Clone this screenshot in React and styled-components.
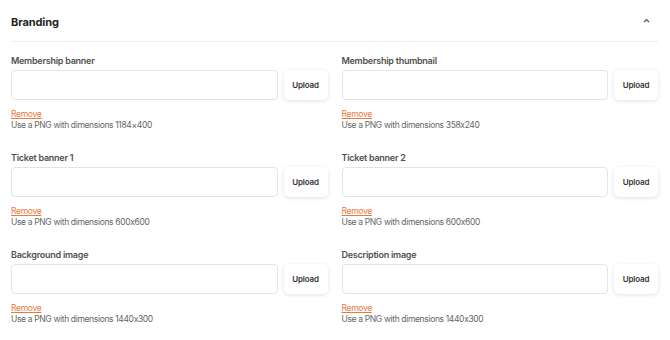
import React from 'react'
import styled, { createGlobalStyle } from 'styled-components'

const GlobalStyle = createGlobalStyle`
  body {
    margin: 0;
    background: #fff;
    font-family: Inter, "Noto Sans", sans-serif;
    font-feature-settings: "calt" 0;
  }
`

const Section = styled.section`
  width: 670px;
  padding: 0 12px 0 11px;
  box-sizing: border-box;
`

const Header = styled.div`
  height: 41px;
  display: flex;
  align-items: center;
  justify-content: space-between;
  border-bottom: 1px solid #ececec;
`

const Title = styled.h2`
  margin: 2px 0 0;
  font-size: 11px;
  font-weight: 700;
  letter-spacing: -0.1px;
  color: #1f1f1f;
`

const Chevron = styled.button`
  border: none;
  background: none;
  padding: 0;
  margin-right: 8px;
  display: flex;
  color: #555;
`

const Grid = styled.div`
  display: grid;
  grid-template-columns: 1fr 1fr;
  column-gap: 14px;
  row-gap: 21px;
  padding-top: 12px;
`

const Field = styled.div`
  display: flex;
  flex-direction: column;
`

const Label = styled.label`
  font-size: 9px;
  line-height: 14px;
  font-weight: 600;
  letter-spacing: -0.25px;
  color: #505050;
  margin-bottom: 2px;
`

const InputRow = styled.div`
  display: flex;
  gap: 6px;
  height: 30px;
`

const FileBox = styled.div`
  flex: 1;
  border: 1px solid #e4e4e4;
  border-radius: 4px;
`

const UploadButton = styled.button`
  width: 44px;
  border: none;
  border-radius: 5px;
  background: #fff;
  box-shadow: 0 1px 4px rgba(0, 0, 0, 0.12);
  font-family: inherit;
  font-size: 8px;
  font-weight: 600;
  letter-spacing: -0.15px;
  color: #333;
  padding: 0;
`

const RemoveLink = styled.a`
  margin-top: 8px;
  font-size: 8.5px;
  line-height: 12px;
  letter-spacing: -0.3px;
  color: #e67a3c;
  text-decoration: underline;
  text-underline-offset: 1px;
  align-self: flex-start;
`

const Help = styled.div`
  font-size: 8.5px;
  line-height: 10px;
  letter-spacing: -0.35px;
  color: #666;
`

const fields = [
  { label: 'Membership banner', dims: '1184×400' },
  { label: 'Membership thumbnail', dims: '358x240' },
  { label: 'Ticket banner 1', dims: '600x600' },
  { label: 'Ticket banner 2', dims: '600x600' },
  { label: 'Background image', dims: '1440x300' },
  { label: 'Description image', dims: '1440x300' },
]

export default function App() {
  return (
    <>
      <GlobalStyle />
      <Section>
        <Header>
          <Title>Branding</Title>
          <Chevron>
            <svg width="7" height="5" viewBox="0 0 7 5" fill="none">
              <path d="M1 4l2.5-2.5L6 4" stroke="currentColor" strokeWidth="1.2" />
            </svg>
          </Chevron>
        </Header>
        <Grid>
          {fields.map((f) => (
            <Field key={f.label}>
              <Label>{f.label}</Label>
              <InputRow>
                <FileBox />
                <UploadButton>Upload</UploadButton>
              </InputRow>
              <RemoveLink href="#">Remove</RemoveLink>
              <Help>Use a PNG with dimensions {f.dims}</Help>
            </Field>
          ))}
        </Grid>
      </Section>
    </>
  )
}
